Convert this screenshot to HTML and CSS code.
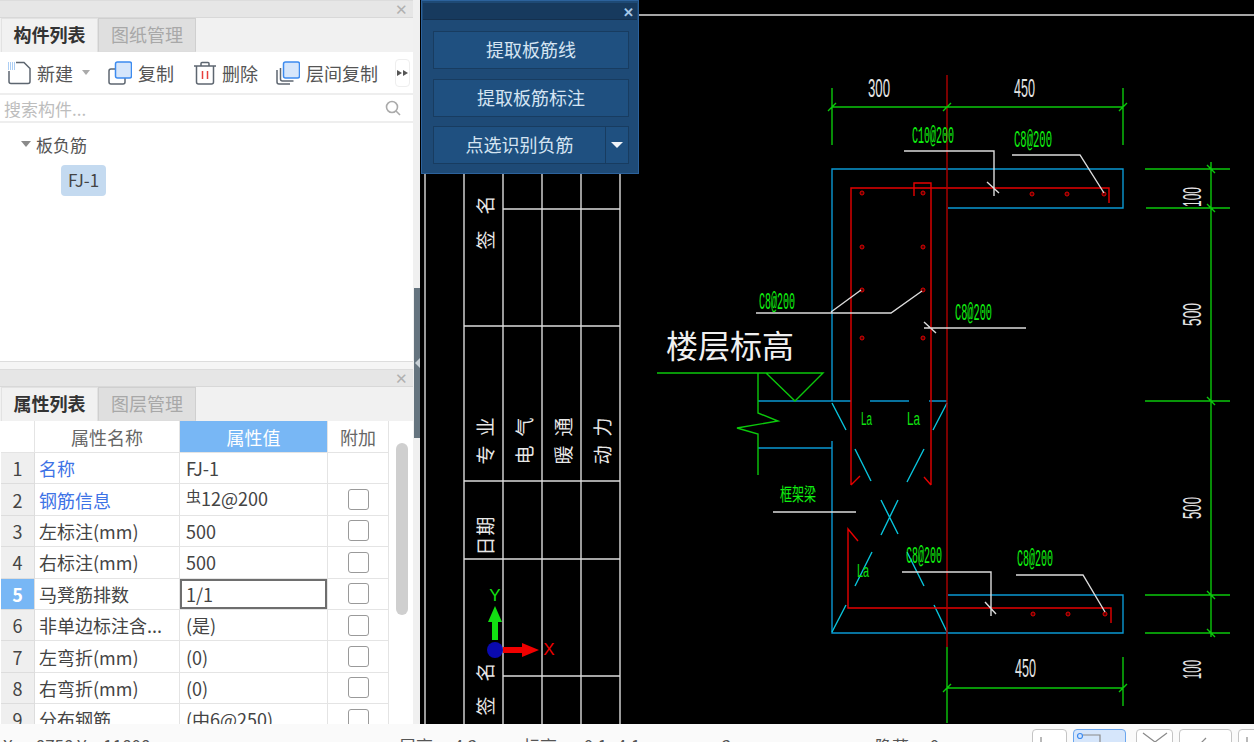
FILE: index.html
```html
<!DOCTYPE html>
<html lang="zh-CN">
<head>
  <meta charset="UTF-8">
  <title>板负筋识别</title>
  <link rel="stylesheet" href="styles.css">
</head>
<body>
  <div class="app">
    <div class="main">
      <div class="side">

        <!-- component list -->
        <section class="panel panel-top">
          <div class="panel-head"><span class="close-x">✕</span></div>
          <div class="tabs">
            <div class="tab active">构件列表</div>
            <div class="tab">图纸管理</div>
          </div>
          <div class="toolbar">
            <div class="tool tool-new">
              <svg class="icon" width="24" height="24" viewBox="0 0 24 24">
                <path class="ic-line" d="M9 1.500h8l6 6v13a2 2 0 0 1-2 2H4a2 2 0 0 1-2-2V10"/>
                <path class="ic-blue-dots" d="M1 2h7M1 4h7M1 6h7M1 8h7"/>
              </svg>
              <span>新建</span><i class="caret"></i>
            </div>
            <div class="tool tool-copy">
              <svg class="icon" width="24" height="24" viewBox="0 0 24 24">
                <rect class="ic-line" x="1" y="8" width="16" height="15" rx="2"/>
                <rect class="ic-front" x="7.500" y="1" width="16" height="16" rx="2"/>
              </svg>
              <span>复制</span>
            </div>
            <div class="tool tool-del">
              <svg class="icon" width="22" height="24" viewBox="0 0 22 24">
                <path class="ic-line" d="M0 5h22M7 5V2.500a1 1 0 0 1 1-1h6a1 1 0 0 1 1 1V5M2.500 5v16a2 2 0 0 0 2 2h13a2 2 0 0 0 2-2V5"/>
                <path class="ic-red" d="M8.500 10v8M13.500 10v8"/>
              </svg>
              <span>删除</span>
            </div>
            <div class="tool tool-floor">
              <svg class="icon" width="24" height="24" viewBox="0 0 24 24">
                <path class="ic-line" d="M1 9v12a2 2 0 0 0 2 2h11M4.500 7v11a2 2 0 0 0 2 2h11"/>
                <rect class="ic-front" x="7.500" y="1" width="16" height="16" rx="2"/>
              </svg>
              <span>层间复制</span>
            </div>
            <div class="more"><i></i><i></i></div>
          </div>
          <div class="search">
            <span>搜索构件...</span>
            <svg width="16" height="16" viewBox="0 0 16 16">
              <circle class="ic-search" cx="7" cy="7" r="5.500"/>
              <path class="ic-search" d="M11 11l4 4"/>
            </svg>
          </div>
          <div class="tree">
            <div class="tree-group"><i class="tree-arrow"></i>板负筋</div>
            <div class="tree-leaf">FJ-1</div>
          </div>
        </section>

        <!-- property list -->
        <section class="panel panel-bottom">
          <div class="panel-head"><span class="close-x">✕</span></div>
          <div class="tabs">
            <div class="tab active">属性列表</div>
            <div class="tab">图层管理</div>
          </div>
          <div class="prop-body">
            <div class="prop-grid">
              <div class="cell head"></div>
              <div class="cell head center">属性名称</div>
              <div class="cell head center selected-col">属性值</div>
              <div class="cell head center">附加</div>

              <div class="cell num">1</div>
              <div class="cell link">名称</div>
              <div class="cell">FJ-1</div>
              <div class="cell"></div>

              <div class="cell num">2</div>
              <div class="cell link">钢筋信息</div>
              <div class="cell raised"><span class="steel">虫</span>12@200</div>
              <div class="cell center"><i class="check"></i></div>

              <div class="cell num">3</div>
              <div class="cell">左标注(mm)</div>
              <div class="cell">500</div>
              <div class="cell center"><i class="check"></i></div>

              <div class="cell num">4</div>
              <div class="cell">右标注(mm)</div>
              <div class="cell">500</div>
              <div class="cell center"><i class="check"></i></div>

              <div class="cell num current">5</div>
              <div class="cell">马凳筋排数</div>
              <div class="cell editing">1/1</div>
              <div class="cell center"><i class="check"></i></div>

              <div class="cell num">6</div>
              <div class="cell">非单边标注含...</div>
              <div class="cell">(是)</div>
              <div class="cell center"><i class="check"></i></div>

              <div class="cell num">7</div>
              <div class="cell">左弯折(mm)</div>
              <div class="cell">(0)</div>
              <div class="cell center"><i class="check"></i></div>

              <div class="cell num">8</div>
              <div class="cell">右弯折(mm)</div>
              <div class="cell">(0)</div>
              <div class="cell center"><i class="check"></i></div>

              <div class="cell num">9</div>
              <div class="cell">分布钢筋</div>
              <div class="cell">(中6@250)</div>
              <div class="cell center"><i class="check"></i></div>
            </div>
            <div class="scroll"><div class="scroll-thumb"></div></div>
          </div>
        </section>
      </div>

      <div class="splitter"><div class="splitter-thumb"><i></i></div></div>

      <div class="canvas">
        <svg class="drawing" width="834" height="724" viewBox="420 0 834 724">
          <!-- title block -->
          <path class="cad-white" d="M639 15H1254M425 173V724M464 173V724M503 173V724M542 173V724M581 173V724M620 173V724M503 209H620M464 326H620M464 481H620M464 559H620M503 676H620"/>
          <text class="block-text" transform="translate(484 205) rotate(-90)">名</text>
          <text class="block-text" transform="translate(484 240) rotate(-90)">签</text>
          <text class="block-text" transform="translate(484 427) rotate(-90)">业</text>
          <text class="block-text" transform="translate(484 455) rotate(-90)">专</text>
          <text class="block-text" transform="translate(523 427) rotate(-90)">气</text>
          <text class="block-text" transform="translate(523 455) rotate(-90)">电</text>
          <text class="block-text" transform="translate(562 427) rotate(-90)">通</text>
          <text class="block-text" transform="translate(562 455) rotate(-90)">暖</text>
          <text class="block-text" transform="translate(601 427) rotate(-90)">力</text>
          <text class="block-text" transform="translate(601 455) rotate(-90)">动</text>
          <text class="block-text" transform="translate(484 526) rotate(-90)">期</text>
          <text class="block-text" transform="translate(484 546) rotate(-90)">日</text>
          <text class="block-text" transform="translate(484 672) rotate(-90)">名</text>
          <text class="block-text" transform="translate(484 706) rotate(-90)">签</text>

          <!-- axis marker -->
          <path class="axis-green" d="M492 640V622H488L495 606L502 622H498V640Z"/>
          <path class="axis-red" d="M503 647H522V643L539 650L522 657V653H503Z"/>
          <circle class="axis-blue" cx="495" cy="650" r="8"/>
          <text class="axis-y" x="495" y="601">Y</text>
          <text class="axis-x" x="549" y="655">X</text>

          <!-- section outline -->
          <path class="cad-blue" d="M832 401V169H1123V208H948M832 441V633H1123V595H948M758 401H851M870 401H909M929 401H947M758 448H832"/>
          <path class="cad-cyan" d="M832 403L846 430M947 403L933 430M855 449L871 481M924 449L907 482M881 500L898 534M898 500L881 535M872 552L855 586M907 552L924 586M846 605L832 632M934 605L947 632"/>

          <!-- rebar -->
          <path class="cad-red" d="M851 485V188H1109V203M931 485V183H914V196M851 485L860 476M931 485L924 477M858 541L848 529V608H1111V623"/>
          <g class="cad-dots">
            <circle cx="862" cy="193" r="2"/><circle cx="923" cy="193" r="2"/><circle cx="1032" cy="194" r="2"/>
            <circle cx="1067" cy="194" r="2"/><circle cx="1104" cy="194" r="2"/><circle cx="862" cy="247" r="2"/>
            <circle cx="923" cy="247" r="2"/><circle cx="862" cy="290" r="2"/><circle cx="923" cy="290" r="2"/>
            <circle cx="862" cy="338" r="2"/><circle cx="923" cy="338" r="2"/><circle cx="1033" cy="614" r="2"/>
            <circle cx="1068" cy="614" r="2"/><circle cx="1105" cy="614" r="2"/>
          </g>
          <path class="cad-darkred" d="M947 75V647"/>

          <!-- dimensions -->
          <path class="cad-green" d="M832 88V145M1123 88V145M828 111L836 103M943 111L951 103M1119 111L1127 103M832 107H1123M1145 169H1230M1146 208H1230M1145 401H1230M1145 595H1230M1145 633H1230M1211 162V637M1207 165L1215 173M1207 204L1215 212M1207 397L1215 405M1207 591L1215 599M1207 629L1215 637M947 647V723M947 688H1123M1123 657V706M943 692L951 684M1119 692L1127 684"/>
          <path class="cad-green" d="M657 373H823L795 401L766 373M758 373V413L778 421L737 428L758 434V475"/>

          <!-- leaders -->
          <path class="cad-white" d="M904 151H994V196M987 182L999 193M1012 155H1080L1104 193M756 313H891L922 291M831 312L861 290M924 328H1026M924 322L936 333M773 512H856M902 572H991V616M985 602L996 614M1016 575H1083L1105 612"/>

          <!-- dimension text -->
          <text class="dim" x="868" y="97" textLength="22" lengthAdjust="spacingAndGlyphs">300</text>
          <text class="dim" x="1014" y="97" textLength="21" lengthAdjust="spacingAndGlyphs">450</text>
          <text class="dim" x="1015" y="677" textLength="21" lengthAdjust="spacingAndGlyphs">450</text>
          <text class="dim" transform="translate(1201 207) rotate(-90)" textLength="20" lengthAdjust="spacingAndGlyphs">100</text>
          <text class="dim" transform="translate(1201 326) rotate(-90)" textLength="23" lengthAdjust="spacingAndGlyphs">500</text>
          <text class="dim" transform="translate(1201 519) rotate(-90)" textLength="22" lengthAdjust="spacingAndGlyphs">500</text>
          <text class="dim" transform="translate(1201 679) rotate(-90)" textLength="19" lengthAdjust="spacingAndGlyphs">100</text>

          <!-- rebar labels -->
          <text class="label" x="912" y="143" textLength="42" lengthAdjust="spacingAndGlyphs">C10@200</text>
          <text class="label" x="1014" y="147" textLength="38" lengthAdjust="spacingAndGlyphs">C8@200</text>
          <text class="label" x="759" y="309" textLength="36" lengthAdjust="spacingAndGlyphs">C8@200</text>
          <text class="label" x="955" y="320" textLength="37" lengthAdjust="spacingAndGlyphs">C8@200</text>
          <text class="label" x="906" y="563" textLength="36" lengthAdjust="spacingAndGlyphs">C8@200</text>
          <text class="label" x="1017" y="566" textLength="36" lengthAdjust="spacingAndGlyphs">C8@200</text>
          <text class="label-small" x="861" y="425" textLength="11" lengthAdjust="spacingAndGlyphs">La</text>
          <text class="label-small" x="907" y="425" textLength="13" lengthAdjust="spacingAndGlyphs">La</text>
          <text class="label-small" x="857" y="577" textLength="12" lengthAdjust="spacingAndGlyphs">La</text>
          <text class="label-cn" x="780" y="501" textLength="36" lengthAdjust="spacingAndGlyphs">框架梁</text>
          <text class="elevation" x="666" y="358">楼层标高</text>
        </svg>

        <!-- floating tool window -->
        <div class="float-panel">
          <div class="float-head"><span class="float-x">✕</span></div>
          <div class="float-body">
            <div class="float-btn">提取板筋线</div>
            <div class="float-btn">提取板筋标注</div>
            <div class="float-split">
              <div class="float-btn grow">点选识别负筋</div>
              <div class="float-btn drop"><i></i></div>
            </div>
          </div>
        </div>
      </div>
    </div>

    <footer class="status">
      <span class="st-coord">X = -8758 Y = 11808</span>
      <span class="st-floor">层高： 4.2</span>
      <span class="st-elev">标高： -0.1~4.1</span>
      <span class="st-count">2</span>
      <span class="st-hide">隐藏： 0</span>
      <div class="st-btns">
        <div class="st-btn w-35">
          <svg width="33" height="12" viewBox="0 0 33 12"><path class="st-ic" d="M8 5V12"/></svg>
        </div>
        <div class="st-btn w-53 on">
          <svg width="51" height="12" viewBox="0 0 51 12"><circle class="st-ic-blue" cx="6" cy="4" r="2.500"/><path class="st-ic" d="M9 3H26V10"/></svg>
        </div>
        <div class="st-btn w-37">
          <svg width="35" height="12" viewBox="0 0 35 12"><path class="st-ic" d="M6 1L18 10L30 1"/></svg>
        </div>
        <div class="st-btn w-53">
          <svg width="51" height="12" viewBox="0 0 51 12"><path class="st-ic" d="M26 6L20 12"/></svg>
        </div>
        <div class="st-btn w-35">
          <svg width="33" height="12" viewBox="0 0 33 12"><path class="st-ic" d="M8 5V12"/></svg>
        </div>
      </div>
    </footer>
  </div>
</body>
</html>
```

FILE: styles.css
```css
* {
  box-sizing: border-box;
}

html, body {
  margin: 0;
  height: 100%;
  overflow: hidden;
}

body {
  font-family: "Noto Sans CJK SC", "Noto Sans", sans-serif;
  font-size: 17px;
  color: #444;
  background: #f5f5f5;
}

.app {
  display: flex;
  flex-direction: column;
  width: 1254px;
  height: 742px;
}

.main {
  display: flex;
  height: 724px;
  flex: none;
}

.side {
  display: flex;
  flex-direction: column;
  width: 413px;
  gap: 7px;
}

.panel {
  display: flex;
  flex-direction: column;
  background: #fff;
  overflow: hidden;
}

.panel-top {
  height: 362px;
  border-bottom: 1px solid #ddd;
}

.panel-bottom {
  flex: 1;
  min-height: 0;
}

.panel-head {
  display: flex;
  justify-content: flex-end;
  align-items: center;
  height: 18px;
  padding-right: 5px;
  background: #e6e6e6;
  border-top: 1px solid #dcdcdc;
  border-bottom: 1px solid #d8d8d8;
  flex: none;
}

.close-x {
  font-size: 15px;
  line-height: 16px;
  color: #b0b0b0;
}

.tabs {
  display: flex;
  height: 34px;
  padding-left: 1px;
  background: #f1f1f1;
  flex: none;
}

.tab {
  width: 97px;
  text-align: center;
  font-size: 18px;
  line-height: 31px;
  color: #a8a8a8;
  background: #dfdfdf;
  border: 1px solid #cfcfcf;
  border-bottom-color: #ddd;
}

.tab + .tab {
  width: 98px;
}

.tab.active {
  color: #333;
  font-weight: 700;
  background: #f1f1f1;
  border-color: #e2e2e2;
  border-bottom: none;
}

.toolbar {
  display: flex;
  align-items: center;
  position: relative;
  height: 43px;
  padding-left: 7px;
  border-bottom: 2px solid #eee;
  flex: none;
}

.tool {
  display: flex;
  align-items: center;
  gap: 6px;
  flex: none;
  font-size: 18px;
  color: #555;
}

.tool-new { width: 101px; }
.tool-copy { width: 86px; }
.tool-del { width: 82px; }

.icon {
  flex: none;
}

.ic-line {
  fill: none;
  stroke: #5d6670;
  stroke-width: 1.5;
}

.ic-front {
  fill: #d6e6fb;
  stroke: #3d8bef;
  stroke-width: 1.5;
}

.ic-blue-dots {
  fill: none;
  stroke: #5a9eea;
  stroke-width: 1.2;
  stroke-dasharray: 1 1;
}

.ic-red {
  fill: none;
  stroke: #e8403c;
  stroke-width: 1.5;
}

.ic-search {
  fill: none;
  stroke: #aaa;
  stroke-width: 1.6;
}

.caret {
  margin-left: 3px;
  border-top: 5px solid #aaa;
  border-left: 4px solid transparent;
  border-right: 4px solid transparent;
}

.more {
  position: absolute;
  right: 3px;
  top: 7px;
  display: flex;
  justify-content: center;
  align-items: center;
  gap: 1px;
  width: 15px;
  height: 28px;
  background: #fff;
  border: 1px solid #eee;
  border-radius: 4px;
}

.more i {
  border-left: 5px solid #555;
  border-top: 3px solid transparent;
  border-bottom: 3px solid transparent;
}

.search {
  display: flex;
  justify-content: space-between;
  align-items: center;
  height: 28px;
  padding: 0 12px 0 4px;
  font-size: 17px;
  color: #bdbdbd;
  border-bottom: 2px solid #eee;
  flex: none;
}

.tree {
  padding: 8px 0 0 21px;
  font-size: 17px;
}

.tree-group {
  display: flex;
  align-items: center;
  height: 26px;
  color: #555;
}

.tree-arrow {
  margin-right: 5px;
  border-top: 6px solid #8a8a8a;
  border-left: 5px solid transparent;
  border-right: 5px solid transparent;
}

.tree-leaf {
  width: 45px;
  height: 31px;
  margin: 8px 0 0 40px;
  text-align: center;
  line-height: 30px;
  background: #c4daf0;
  border-radius: 4px;
}

.prop-body {
  display: flex;
  flex: 1;
  min-height: 0;
  overflow: hidden;
}

.prop-grid {
  display: grid;
  grid-template-columns: 34px 145px 148px 61px;
  grid-template-rows: 32px;
  grid-auto-rows: 31.4px;
  width: 389px;
  padding-left: 1px;
  flex: none;
  align-self: flex-start;
}

.cell {
  display: flex;
  align-items: center;
  padding: 0 4px;
  font-size: 18px;
  white-space: nowrap;
  overflow: hidden;
  border-right: 1px solid #e4e4e4;
  border-bottom: 1px solid #e4e4e4;
}

.cell:nth-child(4n+3) {
  padding-left: 6px;
}

.cell.center {
  justify-content: center;
  padding: 0;
}

.cell.head {
  color: #666;
}

.selected-col {
  color: #fff;
  background: #78b7f5;
}

.cell.head.selected-col {
  color: #fff;
}

.num {
  justify-content: center;
  padding: 0;
  background: #efefef;
  border-color: #ddd;
}

.num.current {
  color: #fff;
  font-weight: 700;
  background: #78b7f5;
}

.link {
  color: #3e73e6;
}

.editing {
  box-shadow: inset 0 0 0 2px #6e6e6e;
}

.raised {
  padding-bottom: 4px;
}

.steel {
  font-size: 15px;
  position: relative;
  top: -2px;
}

.check {
  width: 21px;
  height: 21px;
  background: #fff;
  border: 1px solid #9a9a9a;
  border-radius: 3px;
}

.scroll {
  flex: 1;
  padding: 22px 5px 0 7px;
}

.scroll-thumb {
  width: 12px;
  height: 172px;
  background: #cfcfcf;
  border-radius: 6px;
}

.splitter {
  width: 7px;
  padding-top: 288px;
  background: #f0f0f0;
  flex: none;
}

.splitter-thumb {
  display: flex;
  justify-content: flex-end;
  align-items: center;
  width: 6px;
  height: 150px;
  margin-left: 1px;
  background: #65747f;
}

.splitter-thumb i {
  border-right: 5px solid #c8d0d6;
  border-top: 5px solid transparent;
  border-bottom: 5px solid transparent;
}

.canvas {
  flex: 1;
  position: relative;
  background: #000;
  overflow: hidden;
}

.drawing {
  display: block;
}

.cad-white, .cad-green, .cad-blue, .cad-cyan, .cad-red, .cad-darkred {
  fill: none;
  stroke-width: 1.4;
}

.cad-white { stroke: #dcdcdc; }
.cad-green { stroke: #0bc80b; }
.cad-blue { stroke: #0a98d2; }
.cad-cyan { stroke: #08c4dc; }
.cad-red { stroke: #e60000; }
.cad-darkred { stroke: #b00000; }

.cad-dots circle {
  fill: #500000;
  stroke: #e00000;
  stroke-width: 1;
}

.block-text {
  font-size: 19px;
  fill: #e8e8e8;
  text-anchor: middle;
  dominant-baseline: central;
}

.axis-green { fill: #12e012; }
.axis-red { fill: #f00000; }
.axis-blue { fill: #0a0ab0; }

.axis-y, .axis-x {
  font-family: "Liberation Sans", sans-serif;
  font-size: 17px;
  text-anchor: middle;
}

.axis-y { fill: #12e012; }
.axis-x { fill: #f00000; }

.dim {
  font-family: "Liberation Sans", sans-serif;
  font-size: 25px;
  fill: #e4e4e4;
}

.label {
  font-family: "Liberation Mono", monospace;
  font-size: 24px;
  fill: #10f010;
}

.label-small {
  font-family: "Liberation Sans", sans-serif;
  font-size: 18px;
  fill: #10e010;
}

.label-cn {
  font-size: 18px;
  fill: #10f010;
}

.elevation {
  font-size: 32px;
  fill: #f0f0f0;
}

.float-panel {
  position: absolute;
  left: 1px;
  top: 0;
  width: 218px;
  height: 174px;
  padding: 2px 1px 0;
  background: #1e4a76;
  border: 1px solid #2c629c;
}

.float-head {
  display: flex;
  justify-content: flex-end;
  align-items: center;
  height: 17px;
  padding-right: 3px;
  background: #173a5e;
  border-bottom: 1px solid #14304e;
}

.float-x {
  font-size: 13px;
  font-weight: 700;
  line-height: 1;
  color: #a6c8e8;
}

.float-body {
  display: flex;
  flex-direction: column;
  gap: 10px;
  padding: 11px 8px 0 10px;
}

.float-btn {
  height: 38px;
  text-align: center;
  font-size: 18px;
  line-height: 35px;
  color: #d5e4f2;
  background: #1f5080;
  border: 1px solid #183c60;
}

.float-split {
  display: flex;
  margin-top: -1px;
}

.float-btn.grow {
  flex: 1;
  border-right: none;
}

.float-btn.drop {
  display: flex;
  justify-content: center;
  align-items: center;
  width: 24px;
  border-left: 1px solid #183c60;
}

.float-btn.drop i {
  border-top: 6px solid #f0f4f8;
  border-left: 6px solid transparent;
  border-right: 6px solid transparent;
}

.status {
  display: flex;
  position: relative;
  height: 18px;
  padding: 10px 0 0 3px;
  font-size: 17px;
  line-height: 24px;
  color: #555;
  background: #fafafa;
  white-space: nowrap;
  overflow: hidden;
  flex: none;
}

.st-coord { width: 396px; }
.st-floor { width: 124px; }
.st-elev { width: 199px; }
.st-count { width: 153px; }

.st-btns {
  position: absolute;
  left: 1032px;
  top: 5px;
  display: flex;
  gap: 6px;
}

.st-btn {
  height: 30px;
  padding-top: 2px;
  background: #fff;
  border: 1px solid #c4c4c4;
  border-radius: 4px;
}

.st-btn svg {
  display: block;
}

.st-ic {
  fill: none;
  stroke: #8a8a8a;
  stroke-width: 1.2;
}

.st-ic-blue {
  fill: none;
  stroke: #3d8bef;
  stroke-width: 1.2;
}

.st-btn.on {
  background: #d6e6fb;
  border-color: #6aa6ee;
}

.w-35 { width: 35px; }
.w-37 { width: 37px; margin-left: 4px; }
.w-53 { width: 53px; }
```
